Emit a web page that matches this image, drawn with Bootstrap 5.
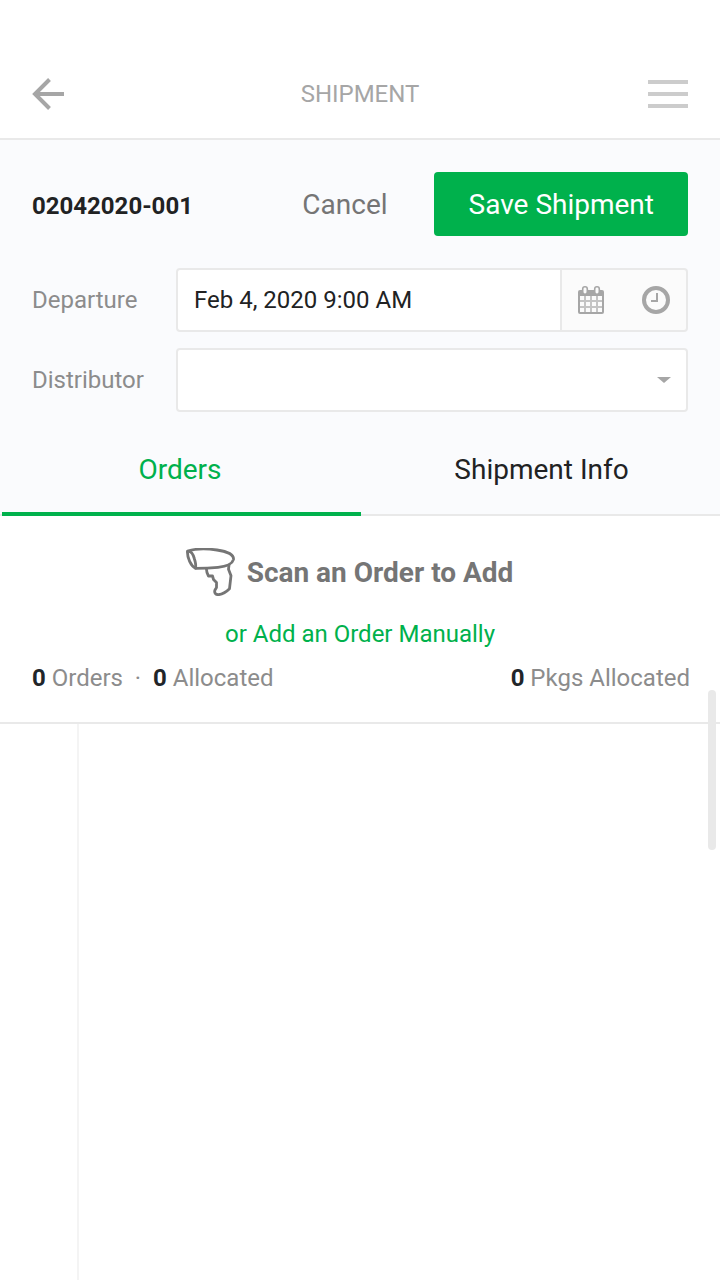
<!DOCTYPE html>
<html lang="en">
<head>
<meta charset="utf-8">
<meta name="viewport" content="width=device-width, initial-scale=1">
<title>Shipment</title>
<link href="https://cdn.jsdelivr.net/npm/bootstrap@5.3.0/dist/css/bootstrap.min.css" rel="stylesheet">
<style>
  :root { --green: #00b14c; --line: #e9e9e9; --ink: #212223; --muted: #8c8c8c; --icon: #a6a6a6; }
  body { font-family: Roboto, "Liberation Sans", sans-serif; font-size: 24px; line-height: 28px; color: var(--ink); background: #fff; }
  .text-lg { font-size: 28px; line-height: 32px; }
  .text-soft { color: var(--muted); }
  .text-brand { color: var(--green); }
  svg { display: block; flex: none; }
  .app-header { padding: 50px 32px 0; border-bottom: 2px solid var(--line); }
  .app-header .bar { height: 88px; }
  .app-header h1 { font-size: 24px; line-height: 28px; color: var(--icon); }
  .shipment-form { background: #fafbfd; }
  .form-body { padding: 32px 32px 0; }
  .top-row { margin-bottom: 32px; }
  .shipment-id { font-size: 24px; line-height: 28px; padding-top: 4px; }
  .btn-cancel { color: #757575; padding: 2px 46px 0; height: 64px; border: 0; }
  .btn-save { background: var(--green); color: #fff; height: 64px; padding: 2px 34px 0 35px; border: 0; border-radius: 4px; }
  .btn-save:hover { background: #009c43; color: #fff; }
  .field-label { width: 144px; flex: none; color: var(--muted); }
  .form-control, .form-select { height: 64px; font-size: 24px; line-height: 28px; color: var(--ink); border: 2px solid var(--line); border-radius: 4px; padding: 0 16px; }
  .form-select { background-image: url("data:image/svg+xml,%3csvg xmlns='http://www.w3.org/2000/svg' viewBox='0 0 14 6'%3e%3cpath d='M0 0h14L7 6z' fill='%23a6a6a6'/%3e%3c/svg%3e"); background-size: 14px 6px; background-position: right 15px center; }
  .input-group > .pickers { width: 128px; margin-left: -2px !important; background: #fbfbfb; border: 2px solid var(--line); border-radius: 4px; padding: 0 16px 0 15px; justify-content: space-between; }
  .pickers .btn { border: 0; padding: 0; height: 60px; }
  .tab-row { height: 104px; padding-left: 2px; box-shadow: inset 0 -2px var(--line); }
  .tab-row .nav-link { height: 104px; color: var(--ink); padding: 16px 0 0 2px; border-bottom: 4px solid transparent; }
  .tab-row .nav-link.active { color: var(--green); border-color: var(--green); padding: 16px 3px 0 0; }
  .orders { padding-top: 32px; border-bottom: 2px solid var(--line); }
  .scan-row { color: #757575; padding-right: 21px; margin-bottom: 24px; }
  .scan-row span { padding-top: 2px; }
  .totals { padding: 16px 30px 30px 32px; }
  .list-gutter { width: 79px; border-right: 2px solid #f4f4f4; }
  .scroll-thumb { position: absolute; top: 174px; right: 4px; width: 8px; height: 160px; border-radius: 4px; background: #e9e9e9; }
</style>
</head>
<body>
<div class="d-flex flex-column min-vh-100">
  <header class="app-header">
    <div class="bar d-flex align-items-center justify-content-between">
      <button type="button" class="btn p-0 border-0" aria-label="Back">
        <svg width="40" height="32" viewBox="0 0 40 32" fill="none" stroke="#a6a6a6" stroke-width="4"><path d="M32 16H3M17.500 1.500 3 16l14.500 14.500"/></svg>
      </button>
      <h1 class="m-0 fw-normal">SHIPMENT</h1>
      <button type="button" class="btn p-0 border-0" aria-label="Menu">
        <svg width="40" height="28" viewBox="0 0 40 28" fill="#ccc"><path d="M0 0h40v4H0zM0 12h40v4H0zM0 24h40v4H0z"/></svg>
      </button>
    </div>
  </header>

  <form class="shipment-form">
    <div class="form-body">
      <div class="top-row d-flex align-items-center">
        <h2 class="shipment-id m-0 me-auto fw-bold">02042020-001</h2>
        <button type="button" class="btn btn-cancel text-lg">Cancel</button>
        <button type="submit" class="btn btn-save text-lg">Save Shipment</button>
      </div>
      <div class="d-flex align-items-center mb-3">
        <label class="field-label" for="departure">Departure</label>
        <div class="input-group">
          <input type="text" class="form-control" id="departure" value="Feb 4, 2020 9:00 AM">
          <div class="input-group-text pickers">
            <button type="button" class="btn d-flex align-items-center" aria-label="Choose date">
              <svg width="28" height="28" viewBox="0 0 28 28"><rect x="1" y="4" width="26" height="24" rx="2" fill="#a6a6a6"/><path fill="#fbfbfb" d="M3 10h4v4H3zM9 10h4v4H9zM15 10h4v4h-4zM21 10h4v4h-4zM3 16h4v4H3zM9 16h4v4H9zM15 16h4v4h-4zM21 16h4v4h-4zM3 22h4v4H3zM9 22h4v4H9zM15 22h4v4h-4zM21 22h4v4h-4z"/><path fill="#fbfbfb" opacity=".35" d="M7 10h2v16H7zM13 10h2v16h-2zM19 10h2v16h-2zM3 14h22v2H3zM3 20h22v2H3z"/><g fill="#fbfbfb" stroke="#a6a6a6" stroke-width="1.600"><rect x="5.700" y=".8" width="4.600" height="7.500" rx="2.200"/><rect x="17.700" y=".8" width="4.600" height="7.500" rx="2.200"/></g></svg>
            </button>
            <button type="button" class="btn d-flex align-items-center" aria-label="Choose time">
              <svg width="28" height="28" viewBox="0 0 28 28" fill="none" stroke="#a6a6a6"><circle cx="14" cy="14" r="12" stroke-width="4"/><path d="M15 7v8H9" stroke-width="2"/></svg>
            </button>
          </div>
        </div>
      </div>
      <div class="d-flex align-items-center">
        <label class="field-label" for="distributor">Distributor</label>
        <select class="form-select" id="distributor"><option></option></select>
      </div>
    </div>
    <ul class="nav tab-row text-lg flex-nowrap" role="tablist">
      <li class="nav-item w-50" role="presentation"><button type="button" role="tab" aria-selected="true" class="nav-link active w-100 bg-transparent border-top-0 border-start-0 border-end-0 text-center">Orders</button></li>
      <li class="nav-item w-50" role="presentation"><button type="button" role="tab" aria-selected="false" class="nav-link w-100 bg-transparent border-top-0 border-start-0 border-end-0 text-center">Shipment Info</button></li>
    </ul>
  </form>

  <main class="position-relative flex-grow-1 d-flex flex-column">
    <section class="orders">
      <div class="scan-row d-flex align-items-center justify-content-center">
        <svg class="me-2" width="53" height="48" viewBox="0 0 53 48" fill="none" stroke="#757575" stroke-width="2.800" stroke-linecap="round" stroke-linejoin="round"><path d="M1.500 3C9 .8 21 .6 31 2c9 1.300 17 4.500 16.500 9.500C46 17 40 18.500 32 19.300c-7 .7-15 1-22.500 1C5 18 1 10 1.500 3Z"/><path d="M2 3.500C4.500 3 7 6 8.300 10.500c1.300 4 1.700 7.500 1.200 9.700"/><path d="M20.500 20.500c-.3 3 .5 4.500 2 7.500h4l1 3.500 3 3v5l-1.500 2.500c-1 2.800.5 4.800 3.500 4.700 4-.5 8-3 11-6l1.500-13-2.500-6.500.5-4"/></svg>
        <span class="text-lg fw-bold">Scan an Order to Add</span>
      </div>
      <div class="text-center"><a href="#" class="text-brand text-decoration-none">or Add an Order Manually</a></div>
      <div class="totals d-flex justify-content-between text-soft">
        <div><b class="text-body">0</b> Orders &nbsp;· &nbsp;<b class="text-body">0</b> Allocated</div>
        <div><b class="text-body">0</b> Pkgs Allocated</div>
      </div>
    </section>
    <div class="flex-grow-1 d-flex"><div class="list-gutter"></div></div>
    <div class="scroll-thumb"></div>
  </main>
</div>
<script src="https://cdn.jsdelivr.net/npm/bootstrap@5.3.0/dist/js/bootstrap.bundle.min.js"></script>
</body>
</html>
